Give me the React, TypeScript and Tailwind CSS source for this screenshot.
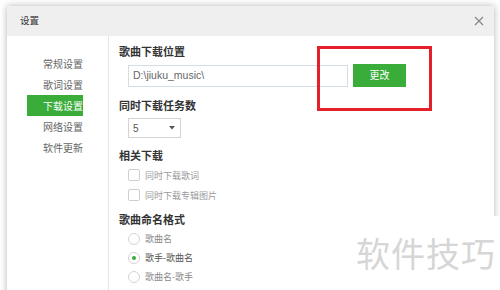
import React from "react";

const font = { fontFamily: '"Noto Sans", "Noto Sans CJK SC", sans-serif' };

function Checkbox({ label }: { label: string }) {
  return (
    <div className="flex items-center h-[20px] pl-[9px]">
      <div className="w-[12px] h-[12px] border border-[#cfcfcf] rounded-[2px] bg-white" />
      <span className="ml-[5px] text-[9px] text-[#9a9a9a] leading-none">{label}</span>
    </div>
  );
}

function Radio({ label, checked }: { label: string; checked?: boolean }) {
  return (
    <div className="flex items-center h-[19px] pl-[9px]">
      <div className="w-[12px] h-[12px] border border-[#d4d4d4] rounded-full bg-white flex items-center justify-center">
        {checked && <div className="w-[4px] h-[4px] rounded-full bg-[#3aac3a]" />}
      </div>
      <span className={`ml-[5px] text-[9px] leading-none ${checked ? "text-[#555]" : "text-[#8a8a8a]"}`}>{label}</span>
    </div>
  );
}

function Heading({ children }: { children: React.ReactNode }) {
  return <div className="text-[11px] font-bold text-[#333] leading-[16px] h-[16px]">{children}</div>;
}

export default function App() {
  const menu = ["常规设置", "歌词设置", "下载设置", "网络设置", "软件更新"];
  return (
    <div className="relative w-[500px] h-[290px] bg-white overflow-hidden" style={font}>
      <div className="absolute left-[7px] top-[6px] w-[487px] h-[300px] bg-white shadow-[0_0_7px_rgba(0,0,0,0.3)] flex flex-col">
        <div className="h-[30px] bg-[#efefef] flex items-center justify-between pl-[13px] pr-[9px] shrink-0">
          <span className="text-[9.5px] text-[#333]">设置</span>
          <svg width="10" height="10" viewBox="0 0 10 10" className="mr-[1px]">
            <path d="M1 1 L9 9 M9 1 L1 9" stroke="#888" strokeWidth="1.3" />
          </svg>
        </div>
        <div className="flex flex-1">
          <div className="w-[102px] border-r border-[#e6e6e6] pt-[17px] shrink-0">
            {menu.map((m, i) => (
              <div
                key={m}
                className={`ml-[20px] w-[56px] h-[21px] flex items-center pl-[16px] text-[10px] leading-none whitespace-nowrap ${
                  i === 2 ? "bg-[#3aac3a] text-white" : "text-[#666]"
                }`}
              >
                {m}
              </div>
            ))}
          </div>
          <div className="flex-1 pl-[10px] pt-[8px] flex flex-col">
            <Heading>歌曲下载位置</Heading>
            <div className="flex items-center mt-[4px] pl-[9px]">
              <div
                className="w-[220px] h-[22px] border border-[#d5dde4] flex items-center pl-[4px] text-[10.5px] text-[#666]"
                style={{ fontFamily: '"Liberation Sans", sans-serif' }}
              >
                D:\jiuku_music\
              </div>
              <div className="ml-[5px] w-[53px] h-[23px] bg-[#3aac3a] text-white text-[10px] flex items-center justify-center">
                更改
              </div>
            </div>
            <div className="mt-[11px]">
              <Heading>同时下载任务数</Heading>
            </div>
            <div className="pl-[9px] mt-[4px]">
              <div className="w-[53px] h-[20px] border border-[#d4d4d4] flex items-center justify-between pl-[4px] pr-[5px]">
                <span className="text-[10px] text-[#555]" style={{ fontFamily: '"Liberation Sans", sans-serif' }}>5</span>
                <svg width="6" height="4" viewBox="0 0 6 4">
                  <path d="M0 0 L6 0 L3 3.5 Z" fill="#555" />
                </svg>
              </div>
            </div>
            <div className="mt-[10px]">
              <Heading>相关下载</Heading>
            </div>
            <div className="mt-[1px]">
              <Checkbox label="同时下载歌词" />
              <Checkbox label="同时下载专辑图片" />
            </div>
            <div className="mt-[7px]">
              <Heading>歌曲命名格式</Heading>
            </div>
            <div className="mt-[1px]">
              <Radio label="歌曲名" />
              <Radio label="歌手-歌曲名" checked />
              <Radio label="歌曲名-歌手" />
            </div>
          </div>
        </div>
      </div>
      <div className="absolute left-[317px] top-[46px] w-[115px] h-[65px] border-[3px] border-[#e4202a]" />
      <div className="absolute left-[345px] top-[216px] w-[155px] h-[74px] bg-white flex items-center justify-end pr-[4px]">
        <span className="text-[34px] text-[#d6d6d6] leading-none tracking-[1px]" style={{ fontFamily: '"Noto Sans CJK SC", sans-serif' }}>
          软件技巧
        </span>
      </div>
    </div>
  );
}
